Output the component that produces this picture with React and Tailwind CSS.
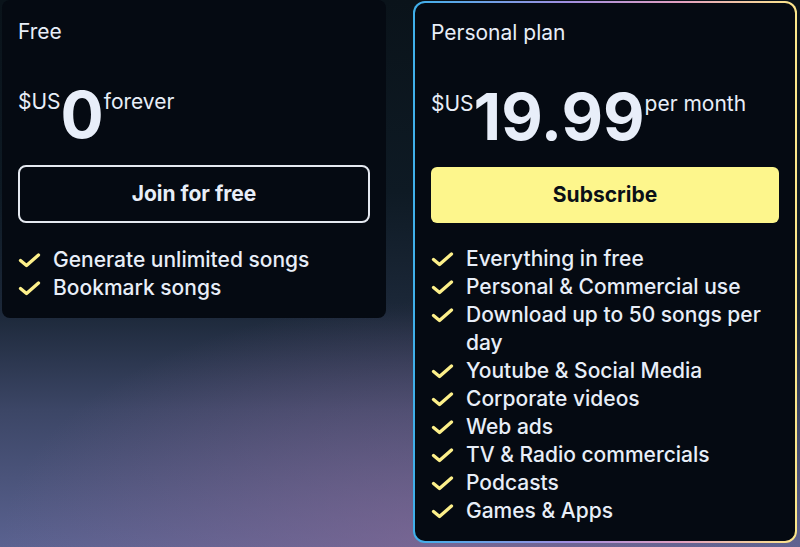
import React from "react";

function Check() {
  return (
    <svg width="24" height="16" viewBox="0 0 24 16" fill="none" className="shrink-0">
      <path d="M2.5 7.5 L8.5 12.5 L20.5 2" stroke="#fdf08a" strokeWidth="3.3" strokeLinecap="round" strokeLinejoin="round" />
    </svg>
  );
}

function Item({ children }) {
  return (
    <li className="flex items-start gap-[11px]">
      <span className="flex h-7 items-center pt-[1px]">
        <Check />
      </span>
      <span>{children}</span>
    </li>
  );
}

function Price({ amount, suffix, mt }) {
  return (
    <div className={"flex items-start " + mt}>
      <span className="mt-[5px] text-[21px] leading-7">$US</span>
      <span className="text-[64px] font-bold leading-none text-[#e8eef9]">{amount}</span>
      <span className="mt-[5px] text-[21px] leading-7">{suffix}</span>
    </div>
  );
}

export default function App() {
  return (
    <div className="relative h-[547px] w-[800px] overflow-hidden bg-[radial-gradient(ellipse_55%_45%_at_55%_100%,rgba(140,105,150,0.6),rgba(140,105,150,0)),linear-gradient(180deg,#0a131a_0%,#0e1a24_35%,#1c2839_57%,#3c4666_75%,#5a6290_100%)] font-[Inter,sans-serif] text-[#e8eef8]">
      <div className="flex items-start gap-[27px] pl-[2px]">
        <div className="w-[384px] rounded-lg bg-[#050a12] px-4 pt-[18px] pb-4">
          <div className="text-[21px] leading-7">Free</div>
          <Price amount="0" suffix="forever" mt="mt-[37px]" />
          <button className="mt-[18px] flex h-[58px] w-full items-center justify-center rounded-lg border-2 border-[#e5e9f0] text-[21px] font-bold">
            Join for free
          </button>
          <ul className="mt-[23px] text-[21px] font-medium leading-7">
            <Item>Generate unlimited songs</Item>
            <Item>Bookmark songs</Item>
          </ul>
        </div>
        <div className="mt-[1px] w-[384px] rounded-xl bg-[linear-gradient(90deg,#3fb0ea_0%,#a08ee0_40%,#e4a0c0_70%,#fde88a_100%)] p-[2px]">
          <div className="rounded-[10px] bg-[#050a12] px-4 pt-4 pb-4">
            <div className="text-[21px] leading-7">Personal plan</div>
            <Price amount="19.99" suffix="per month" mt="mt-[38px]" />
            <button className="mt-[18px] flex h-[56px] w-full items-center justify-center rounded-md bg-[#fdf68c] text-[21px] font-bold text-[#0b0f17]">
              Subscribe
            </button>
            <ul className="mt-[22px] text-[21px] font-medium leading-7">
              <Item>Everything in free</Item>
              <Item>Personal &amp; Commercial use</Item>
              <Item>Download up to 50 songs per day</Item>
              <Item>Youtube &amp; Social Media</Item>
              <Item>Corporate videos</Item>
              <Item>Web ads</Item>
              <Item>TV &amp; Radio commercials</Item>
              <Item>Podcasts</Item>
              <Item>Games &amp; Apps</Item>
            </ul>
          </div>
        </div>
      </div>
    </div>
  );
}
